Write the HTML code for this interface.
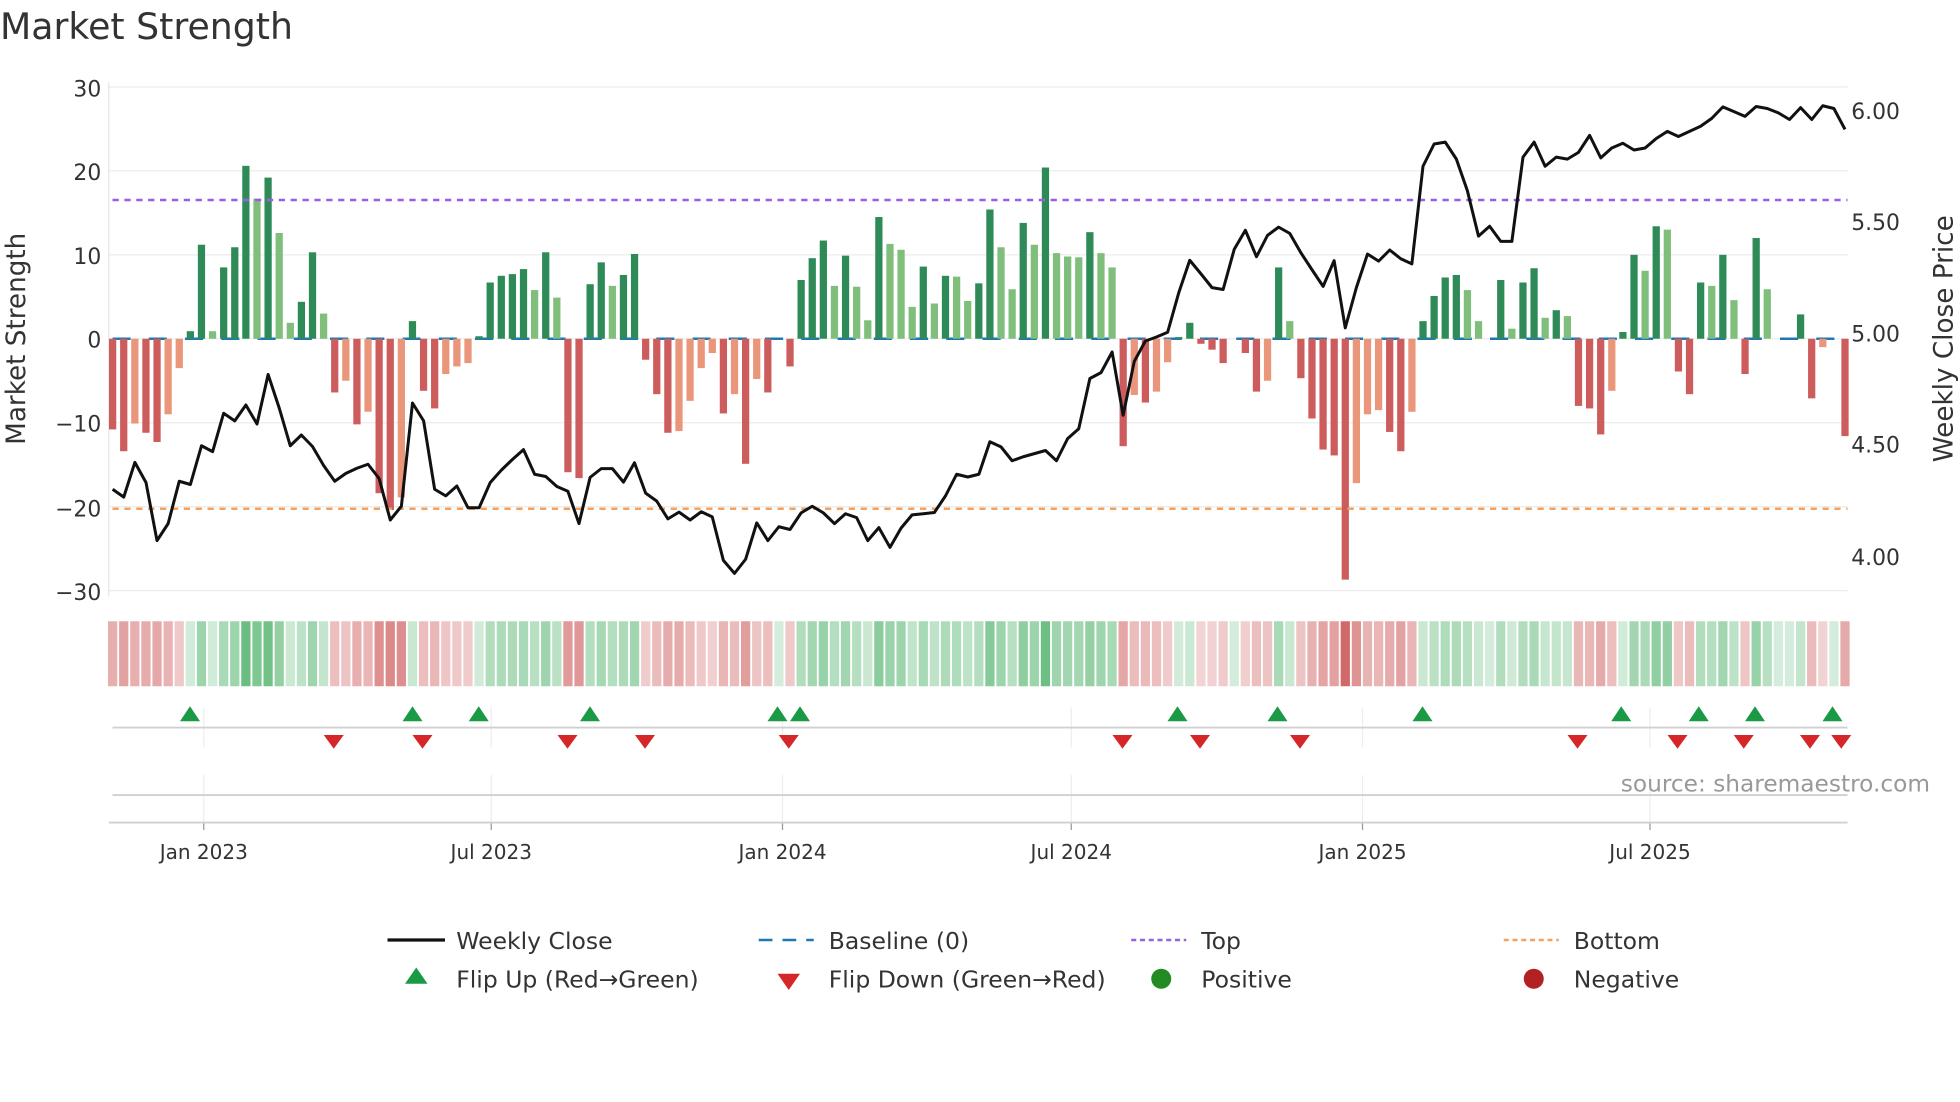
<!DOCTYPE html>
<html><head><meta charset="utf-8">
<style>
html,body{margin:0;padding:0;background:#fff;}
svg{display:block;font-family:"DejaVu Sans","Liberation Sans",sans-serif;}
</style></head>
<body>
<svg id="s" width="1960" height="1102" viewBox="0 0 1568 881.6" xmlns="http://www.w3.org/2000/svg">
<rect width="1568" height="882" fill="#fff"/>
<text x="0" y="31" font-size="29" fill="#333">Market Strength</text>
<g id="grid"></g>
<g id="bars"></g>
<g id="heat"></g>
<g id="marks"></g>
<g font-size="17.5" fill="#333" text-anchor="end">
<text x="81" y="77">30</text><text x="81" y="144">20</text><text x="81" y="211">10</text>
<text x="81" y="278">0</text><text x="81" y="345">−10</text><text x="81" y="413">−20</text><text x="81" y="480">−30</text>
</g>
<g font-size="17.5" fill="#333">
<text x="1481" y="95">6.00</text><text x="1481" y="184">5.50</text><text x="1481" y="273">5.00</text>
<text x="1481" y="362">4.50</text><text x="1481" y="452">4.00</text>
</g>
<text transform="translate(20,271) rotate(-90)" text-anchor="middle" font-size="21" fill="#333">Market Strength</text>
<text transform="translate(1562,271) rotate(-90)" text-anchor="middle" font-size="21" fill="#333">Weekly Close Price</text>
<g font-size="16" fill="#333" text-anchor="middle">
<text x="163" y="687">Jan 2023</text><text x="393" y="687">Jul 2023</text><text x="626" y="687">Jan 2024</text>
<text x="857" y="687">Jul 2024</text><text x="1090" y="687">Jan 2025</text><text x="1320" y="687">Jul 2025</text>
</g>
<text x="1544" y="633" text-anchor="end" font-size="18.6" fill="#999">source: sharemaestro.com</text>
<g font-size="18.8" fill="#333">
<line x1="310" y1="752" x2="356" y2="752" stroke="#111" stroke-width="2.6"/>
<text x="365" y="759">Weekly Close</text>
<line x1="607" y1="752" x2="651" y2="752" stroke="#1f77b4" stroke-width="2" stroke-dasharray="11 8"/>
<text x="663" y="759">Baseline (0)</text>
<line x1="905" y1="752" x2="949" y2="752" stroke="#9b5de5" stroke-width="2" stroke-dasharray="4 3"/>
<text x="961" y="759">Top</text>
<line x1="1203" y1="752" x2="1247" y2="752" stroke="#f4a261" stroke-width="2" stroke-dasharray="4 3"/>
<text x="1259" y="759">Bottom</text>
<polygon points="333,774 342,787 324,787" fill="#1a9a45"/>
<text x="365" y="790">Flip Up (Red→Green)</text>
<polygon points="622,779 640,779 631,792" fill="#d62728"/>
<text x="663" y="790">Flip Down (Green→Red)</text>
<circle cx="929" cy="783" r="8" fill="#228b22"/>
<text x="961" y="790">Positive</text>
<circle cx="1227" cy="783" r="8" fill="#b22222"/>
<text x="1259" y="790">Negative</text>
</g>
</svg>
<script>
var NS="http://www.w3.org/2000/svg";
function el(p,t,a){var e=document.createElementNS(NS,t);for(var k in a)e.setAttribute(k,a[k]);p.appendChild(e);return e;}
var s=document.getElementById('s');
var grid=document.getElementById('grid'),bars=document.getElementById('bars'),heat=document.getElementById('heat'),marks=document.getElementById('marks');
function yv(v){return 271-v*6.715;}
for(var v=-30;v<=30;v+=10){el(grid,'line',{x1:87,x2:1478,y1:yv(v),y2:yv(v),stroke:'#ececec','stroke-width':1});}
el(grid,'line',{x1:87,x2:87,y1:66,y2:477,stroke:'#e6e6e6','stroke-width':1});
var B=[[-10.8,1],[-13.4,1],[-10.1,0],[-11.2,1],[-12.3,1],[-9,0],[-3.5,0],[0.9,1],[11.2,1],[0.9,0],[8.5,1],[10.9,1],[20.6,1],[16.7,0],[19.2,1],[12.6,0],[1.9,0],[4.4,1],[10.3,1],[3,0],
[-6.4,1],[-5,0],[-10.2,1],[-8.7,0],[-18.4,1],[-20.4,1],[-18.9,0],[2.1,1],[-6.2,1],[-8.3,1],[-4.2,0],[-3.3,0],[-2.9,0],[0.3,1],[6.7,1],[7.5,1],[7.7,1],[8.3,1],[5.8,0],[10.3,1],
[4.9,0],[-15.9,1],[-16.6,1],[6.5,1],[9.1,1],[6.3,0],[7.6,1],[10.1,1],[-2.5,1],[-6.6,1],[-11.2,1],[-11,0],[-7.4,0],[-3.5,0],[-1.7,0],[-8.9,1],[-6.6,0],[-14.9,1],[-4.8,0],[-6.4,1],
[0,1],[-3.3,1],[7,1],[9.6,1],[11.7,1],[6.3,0],[9.9,1],[6.2,0],[2.2,0],[14.5,1],[11.3,0],[10.6,0],[3.8,0],[8.6,1],[4.2,0],[7.5,1],[7.4,0],[4.5,0],[6.6,1],[15.4,1],
[10.9,0],[5.9,0],[13.8,1],[11.2,0],[20.4,1],[10.2,0],[9.8,0],[9.7,0],[12.7,1],[10.2,0],[8.5,0],[-12.8,1],[-6.7,0],[-7.6,1],[-6.3,0],[-2.8,0],[0.2,1],[1.9,1],[-0.6,1],[-1.3,1],
[-2.9,1],[0,1],[-1.7,1],[-6.3,1],[-5,0],[8.5,1],[2.1,0],[-4.7,1],[-9.5,1],[-13.2,1],[-13.9,1],[-28.7,1],[-17.2,0],[-9,0],[-8.5,0],[-11.1,1],[-13.4,1],[-8.7,0],[2.1,1],[5.1,1],
[7.3,1],[7.6,1],[5.8,0],[2.1,0],[0,1],[7,1],[1.2,0],[6.7,1],[8.4,1],[2.5,0],[3.4,1],[2.7,0],[-8,1],[-8.3,1],[-11.4,1],[-6.2,0],[0.8,1],[10,1],[8.1,0],[13.4,1],
[13,0],[-3.9,1],[-6.6,1],[6.7,1],[6.3,0],[10,1],[4.6,0],[-4.2,1],[12,1],[5.9,0],[0,1],[0,1],[2.9,1],[-7.1,1],[-1,0],[0,1],[-11.6,1]];
function xb(i){return 90.1+8.884*i;}
B.forEach(function(b,i){var v=b[0],c;
 if(v>=0){var a=0.22+0.55*Math.min(v/21,1);c='rgba(60,170,90,'+a.toFixed(2)+')';}
 else{var a2=0.22+0.6*Math.min(-v/29,1);c='rgba(200,70,70,'+a2.toFixed(2)+')';}
 el(heat,'rect',{x:xb(i)-3.7,y:497,width:7.4,height:52,fill:c});
});
el(bars,'line',{x1:90,x2:1478,y1:271,y2:271,stroke:'#1f77b4','stroke-width':2,'stroke-dasharray':'14.5 14.5'});
B.forEach(function(b,i){var v=b[0];if(v===0)return;var col=v>0?(b[1]?'#2e8b57':'#7fbf7b'):(b[1]?'#cd5c5c':'#e9967a');
 var y0=yv(Math.max(v,0)),h=Math.abs(v)*6.715;el(bars,'rect',{x:xb(i)-2.9,y:y0,width:5.8,height:h,fill:col});});
el(bars,'line',{x1:90,x2:1478,y1:160,y2:160,stroke:'#9b5de5','stroke-width':2,'stroke-dasharray':'5 4.5'});
el(bars,'line',{x1:90,x2:1478,y1:407,y2:407,stroke:'#f4a261','stroke-width':2,'stroke-dasharray':'5 4.5'});
var P=[1035,1055,967,1018,1165,1122,1015,1023,925,940,843,862,822,870,745,830,925,898,927,975,1015,995,982,972,1008,1113,1078,817,862,1035,1052,1027,1082,1082,1018,987,960,935,997,1003,
1028,1040,1122,1005,983,983,1017,968,1045,1065,1110,1093,1113,1092,1105,1215,1248,1212,1120,1165,1130,1137,1095,1078,1095,1122,1097,1107,1165,1132,1182,1133,1100,1097,1094,1052,997,1004,997,915,
928,963,953,945,937,963,907,882,755,740,688,848,712,660,650,638,538,456,490,525,530,428,380,447,393,372,388,437,480,522,457,627,525,440,458,430,452,465,218,162,
157,200,280,395,370,408,408,195,157,218,195,200,183,140,197,172,160,177,172,148,130,143,130,117,97,68,80,92,67,72,83,100,70,100,65,72,125];
var pts=P.map(function(z,i){return xb(i).toFixed(1)+','+(64+z*0.3163).toFixed(1);}).join(' ');
el(bars,'polyline',{points:pts,fill:'none',stroke:'#111','stroke-width':2.4,'stroke-linejoin':'round'});
[163,393,626,857,1090,1320].forEach(function(x){el(marks,'line',{x1:x,x2:x,y1:566,y2:598,stroke:'#eee','stroke-width':1});el(marks,'line',{x1:x,x2:x,y1:620,y2:658,stroke:'#eee','stroke-width':1});el(marks,'line',{x1:x,x2:x,y1:658,y2:664,stroke:'#999','stroke-width':1});});
el(marks,'line',{x1:90,x2:1478,y1:582,y2:582,stroke:'#d0d0d0','stroke-width':1.5});
el(marks,'line',{x1:90,x2:1478,y1:636,y2:636,stroke:'#d0d0d0','stroke-width':1.5});
el(marks,'line',{x1:87,x2:1478,y1:658,y2:658,stroke:'#d0d0d0','stroke-width':1.5});
[152,330,383,472,622,640,942,1022,1138,1297,1359,1404,1466].forEach(function(x){el(marks,'polygon',{points:(x)+',565 '+(x+8)+',577 '+(x-8)+',577',fill:'#1a9a45'});});
[267,338,454,516,631,898,960,1040,1262,1342,1395,1448,1473].forEach(function(x){el(marks,'polygon',{points:(x-8)+',588 '+(x+8)+',588 '+x+',599',fill:'#d62728'});});
</script>
</body></html>
